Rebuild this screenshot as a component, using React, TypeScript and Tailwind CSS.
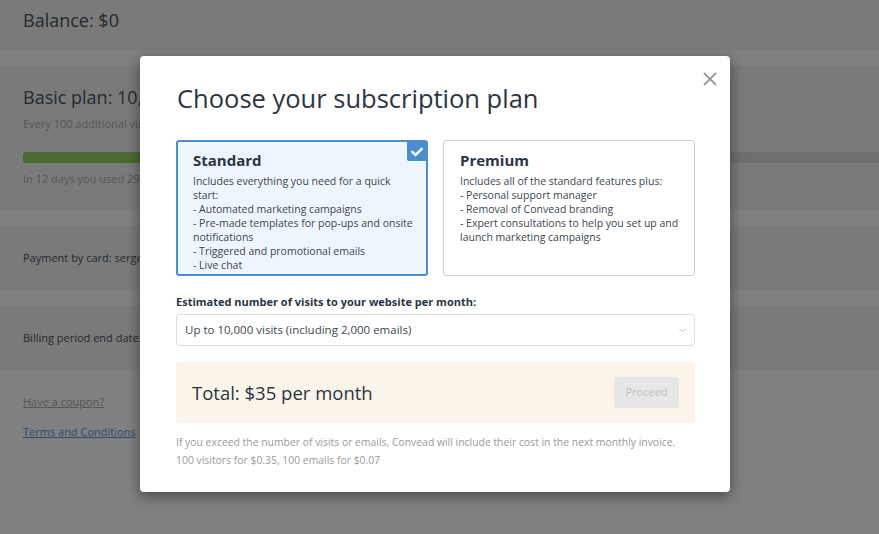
import { X, ChevronDown } from 'lucide-react';

const plans = [
  {
    name: 'Standard',
    selected: true,
    lines: [
      'Includes everything you need for a quick start:',
      '- Automated marketing campaigns',
      '- Pre-made templates for pop-ups and onsite notifications',
      '- Triggered and promotional emails',
      '- Live chat',
    ],
  },
  {
    name: 'Premium',
    selected: false,
    lines: [
      'Includes all of the standard features plus:',
      '- Personal support manager',
      '- Removal of Convead branding',
      '- Expert consultations to help you set up and launch marketing campaigns',
    ],
  },
];

function PlanCard({ plan }: { plan: (typeof plans)[number] }) {
  return (
    <div
      className={
        plan.selected
          ? 'relative h-[136px] rounded-[3px] border-2 border-[#4a8ed0] bg-[#eff5fd] pl-[15px] pr-[10px] pt-[7px]'
          : 'relative h-[136px] rounded-[3px] border border-[#cfcfcf] bg-white pl-[16px] pr-[10px] pt-[8px]'
      }
    >
      {plan.selected && (
        <div className="absolute right-0 top-0 flex h-[19px] w-[19px] items-center justify-center rounded-bl-[2px] bg-[#4a8ed0]">
          {/* font-awesome style check */}
          <svg viewBox="0 0 512 512" width="12" height="12" fill="white">
            <path d="M173.9 439.4l-166.4-166.4c-10-10-10-26.2 0-36.2l36.2-36.2c10-10 26.2-10 36.2 0L192 312.7 432.1 72.6c10-10 26.2-10 36.2 0l36.2 36.2c10 10 10 26.2 0 36.2l-294.4 294.4c-10 10-26.2 10-36.2 0z" />
          </svg>
        </div>
      )}
      <h3 className="text-[15px] font-bold leading-[22px] text-[#2b3542]">{plan.name}</h3>
      <div className="mt-[3px] text-[10.5px] leading-[14px] text-[#3d4651]">
        {plan.lines.map((l) => (
          <p key={l}>{l}</p>
        ))}
      </div>
    </div>
  );
}

export default function App() {
  return (
    <main className="relative h-[534px] w-[879px] overflow-hidden bg-[#808080] font-['Open_Sans',sans-serif]">
      {/* page behind the dialog */}
      <section className="flex h-[50px] items-start bg-[#7a7a7a] px-[23px] pt-[8px]">
        <h2 className="text-[18px] leading-[24px] text-[#24292f]">Balance: $0</h2>
      </section>
      <section className="mt-[16px] h-[144px] bg-[#7a7a7a] pl-[23px] pt-[19px]">
        <h2 className="text-[18px] leading-[24px] text-[#24292f]">Basic plan: 10,000 visits</h2>
        <p className="mt-[8px] text-[11px] leading-[14px] text-[#555]">Every 100 additional visits cost $0.35</p>
        <div className="mt-[21px] flex h-[11px]">
          <div className="w-[300px] rounded-l-[3px] bg-[#4b6a31]" />
          <div className="flex-1 bg-[#6e6e6e]" />
        </div>
        <p className="mt-[9px] text-[11px] leading-[14px] text-[#555]">In 12 days you used 29 visits</p>
      </section>
      <section className="mt-[16px] flex h-[64px] items-center bg-[#7a7a7a] px-[23px]">
        <p className="text-[11px] text-[#24292f]">Payment by card: sergey@convead.com</p>
      </section>
      <section className="mt-[16px] flex h-[64px] items-center bg-[#7a7a7a] px-[23px]">
        <p className="text-[11px] text-[#24292f]">Billing period end date: 12.12.2016</p>
      </section>
      <div className="flex flex-col items-start gap-[15px] px-[23px] pt-[24px] text-[11px] leading-[15px]">
        <a className="text-[#555] underline">Have a coupon?</a>
        <a className="text-[#2a4a6a] underline">Terms and Conditions</a>
      </div>

      {/* dialog */}
      <div className="absolute left-[140px] top-[56px] h-[436px] w-[590px] rounded-[4px] bg-white pl-[36px] pr-[35px] pt-[25px] shadow-[0_4px_14px_rgba(0,0,0,0.45)]">
        <button className="absolute right-[9px] top-[12px] text-[#9a9a9a]">
          <X size={22} strokeWidth={2} />
        </button>
        <h1 className="pl-[1px] text-[25.5px] font-normal leading-[34px] text-[#2b3542]">
          Choose your subscription plan
        </h1>
        <div className="mt-[25px] grid grid-cols-2 gap-[15px]">
          {plans.map((p) => (
            <PlanCard key={p.name} plan={p} />
          ))}
        </div>
        <label className="mt-[19px] block text-[11px] font-bold leading-[14px] text-[#2b3542]">
          Estimated number of visits to your website per month:
        </label>
        <div className="mt-[5px] flex h-[32px] items-center justify-between rounded-[4px] border border-[#dcdcdc] pl-[8px] pr-[6px] text-[11.5px] text-[#3d4651]">
          <span>Up to 10,000 visits (including 2,000 emails)</span>
          <ChevronDown size={11} strokeWidth={1.5} className="text-[#999]" />
        </div>
        <div className="mt-[16px] flex h-[61px] items-center justify-between rounded-[3px] bg-[#fbf4ea] pl-[16px] pr-[16px]">
          <span className="text-[18.5px] leading-[24px] text-[#2b3542]">Total: $35 per month</span>
          <button className="h-[31px] w-[65px] rounded-[3px] bg-[#e7e7e7] text-[11px] text-[#bdbdbd]">Proceed</button>
        </div>
        <p className="mt-[10px] text-[10.4px] leading-[18px] text-[#9a9a9a]">
          If you exceed the number of visits or emails, Convead will include their cost in the next monthly invoice.
          <br />
          100 visitors for $0.35, 100 emails for $0.07
        </p>
      </div>
    </main>
  );
}
